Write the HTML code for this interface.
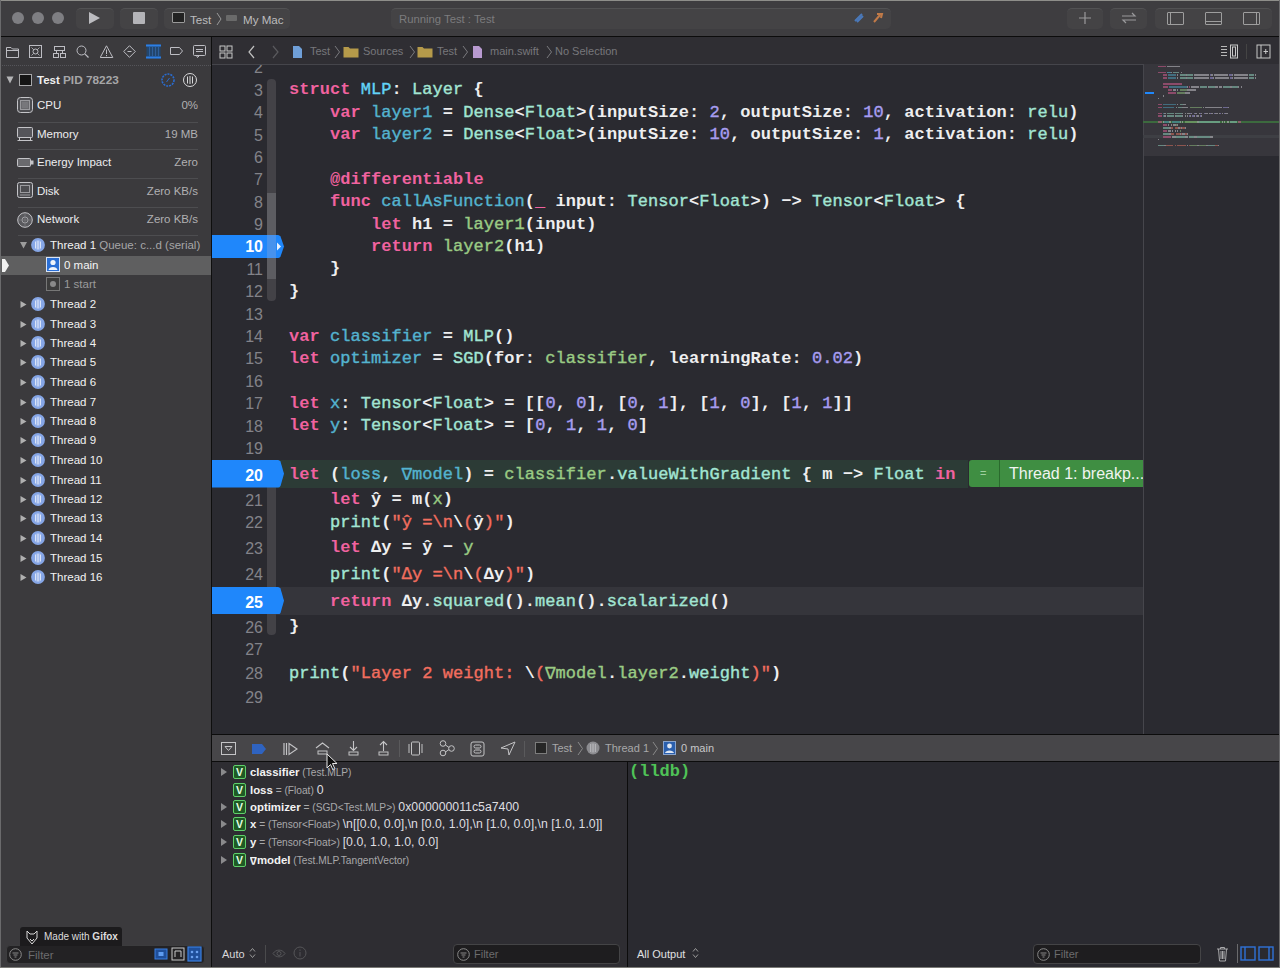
<!DOCTYPE html><html><head><meta charset="utf-8"><style>
*{margin:0;padding:0;box-sizing:border-box}
html,body{width:1280px;height:968px;overflow:hidden;background:#292a30}
body{position:relative;font-family:"Liberation Sans",sans-serif;color:#e0e0e0}
.abs{position:absolute}
.t{position:absolute;white-space:pre;line-height:1}
.code{position:absolute;white-space:pre;font-family:"Liberation Mono",monospace;font-size:17px;line-height:20px;color:#eeeeef;font-weight:bold;letter-spacing:0.05px}
.ln{position:absolute;right:1017px;font-size:16px;line-height:20px;color:#838389;text-align:right;white-space:pre}
.kw{color:#f0629f}.ty,.decl,.tdecl,.num,.fn,.str{font-weight:normal;-webkit-text-stroke:0.4px currentColor}
.ty{color:#a2e5d3}.decl{color:#54b3cf}.tdecl{color:#62d3f7}
.num{color:#a79df0}.fn{color:#9acb84}.str{color:#f26e5f}.mint{color:#a2e5d3}
.nab{display:inline-block;transform:translateY(-2.7px) scaleY(-1)}
.side{position:absolute;font-size:11.5px;line-height:14px;white-space:pre;color:#e6e6e6}
</style></head><body>
<div class="abs" style="left:0px;top:0px;width:1280px;height:36px;background:#3e3d40;"></div>
<div class="abs" style="left:0px;top:0px;width:1280px;height:1px;background:#8e8e8a;"></div>
<div class="abs" style="left:0px;top:36px;width:1280px;height:1px;background:#0c0c0c;"></div>
<div class="abs" style="left:12px;top:12px;width:12px;height:12px;border-radius:50%;background:#7e7e82"></div>
<div class="abs" style="left:32px;top:12px;width:12px;height:12px;border-radius:50%;background:#7e7e82"></div>
<div class="abs" style="left:52px;top:12px;width:12px;height:12px;border-radius:50%;background:#7e7e82"></div>
<div class="abs" style="left:76px;top:8px;width:38px;height:21px;border-radius:5px;background:#444345;border-top:1px solid #525254"></div>
<div class="abs" style="left:120px;top:8px;width:38px;height:21px;border-radius:5px;background:#444345;border-top:1px solid #525254"></div>
<div class="abs" style="left:164px;top:8px;width:126px;height:21px;border-radius:5px;background:#444345;border-top:1px solid #525254"></div>
<div class="abs" style="left:391px;top:8px;width:500px;height:21px;border-radius:5px;background:#444345;border-top:1px solid #525254"></div>
<div class="abs" style="left:1067px;top:8px;width:36px;height:21px;border-radius:5px;background:#444345;border-top:1px solid #525254"></div>
<div class="abs" style="left:1110px;top:8px;width:37px;height:21px;border-radius:5px;background:#444345;border-top:1px solid #525254"></div>
<div class="abs" style="left:1155px;top:8px;width:117px;height:21px;border-radius:5px;background:#444345;border-top:1px solid #525254"></div>
<svg class="abs" style="left:88px;top:11px" width="14" height="14"><polygon points="1,1 12,7 1,13" fill="#bcbcc0"/></svg>
<div class="abs" style="left:133px;top:12px;width:12px;height:12px;background:#b4b4b8;border-radius:1px"></div>
<div class="abs" style="left:172px;top:12px;width:13px;height:11px;border:1px solid #9a9a9a;background:#222;border-radius:1px"></div>
<div class="t" style="left:190px;top:13.5px;font-size:11.6px;color:#bcbcbe">Test</div>
<svg class="abs" style="left:216px;top:12px" width="8" height="15"><polyline points="1,1 5,7 1,13" fill="none" stroke="#9a9a9a" stroke-width="1"/></svg>
<div class="abs" style="left:226px;top:15px;width:11px;height:6px;background:#6a6a6a;border-radius:1px"></div>
<div class="t" style="left:243px;top:13.5px;font-size:11.6px;color:#bcbcbe">My Mac</div>
<div class="t" style="left:399px;top:14px;font-size:11.3px;color:#7c7c7e">Running Test : Test</div>
<svg class="abs" style="left:853px;top:12px" width="12" height="12"><path d="M2,9 L9,2 M4,10 L10,4" stroke="#4a78b8" stroke-width="2"/></svg>
<svg class="abs" style="left:872px;top:11px" width="12" height="13"><path d="M2,11 L8,4 M5,3 L10,3 L9,7" stroke="#c07a48" stroke-width="2" fill="none"/></svg>
<svg class="abs" style="left:1078px;top:11px" width="14" height="14"><path d="M7,1 V13 M1,7 H13" stroke="#9a9a9c" stroke-width="1.2"/></svg>
<svg class="abs" style="left:1120px;top:11px" width="18" height="14"><path d="M2,5 H15 L12,2 M16,9 H3 L6,12" stroke="#9a9a9c" stroke-width="1.2" fill="none"/></svg>
<div class="abs" style="left:1167px;top:12px;width:17px;height:13px;border:1px solid #9e9e9e;border-radius:1px"></div>
<div class="abs" style="left:1170px;top:12px;width:1px;height:13px;background:#9e9e9e;"></div>
<div class="abs" style="left:1205px;top:12px;width:17px;height:13px;border:1px solid #9e9e9e;border-radius:1px"></div>
<div class="abs" style="left:1205px;top:21px;width:17px;height:1px;background:#9e9e9e;"></div>
<div class="abs" style="left:1243px;top:12px;width:17px;height:13px;border:1px solid #9e9e9e;border-radius:1px"></div>
<div class="abs" style="left:1256px;top:12px;width:1px;height:13px;background:#9e9e9e;"></div>
<div class="abs" style="left:0px;top:37px;width:211px;height:931px;background:#3b3a3d;"></div>
<div class="abs" style="left:211px;top:37px;width:1px;height:931px;background:#0e0e0e;"></div>
<svg class="abs" style="left:5px;top:45px" width="15" height="14" viewBox="0 0 15 14"><path d="M1.5,2.5 H6 L7.5,4 H13.5 V12.5 H1.5 Z M1.5,5.5 H13.5" fill="none" stroke="#bdbdc3" stroke-width="1"/></svg>
<svg class="abs" style="left:29px;top:45px" width="14" height="14" viewBox="0 0 14 14"><rect x="0.5" y="0.5" width="12" height="12" fill="none" stroke="#bdbdc3"/><path d="M2.5,2.5 L10.5,10.5 M10.5,2.5 L2.5,10.5" stroke="#bdbdc3" stroke-width="0.8"/><circle cx="6.5" cy="6.5" r="2.5" fill="#3b3a3d" stroke="#bdbdc3"/></svg>
<svg class="abs" style="left:53px;top:45px" width="14" height="14" viewBox="0 0 14 14"><rect x="1.5" y="1.5" width="10" height="4" fill="none" stroke="#bdbdc3"/><rect x="0.5" y="8.5" width="5" height="4" fill="none" stroke="#bdbdc3"/><rect x="7.5" y="8.5" width="5" height="4" fill="none" stroke="#bdbdc3"/><path d="M3.5,5.5 V8.5 M9.5,5.5 V8.5" stroke="#bdbdc3"/></svg>
<svg class="abs" style="left:76px;top:45px" width="14" height="14" viewBox="0 0 14 14"><circle cx="5.5" cy="5.5" r="4.5" fill="none" stroke="#bdbdc3"/><path d="M8.8,8.8 L12.5,12.5" stroke="#bdbdc3" stroke-width="1.2"/></svg>
<svg class="abs" style="left:100px;top:45px" width="14" height="14" viewBox="0 0 14 14"><path d="M6.5,0.8 L12.8,12.5 H0.2 Z" fill="none" stroke="#bdbdc3" stroke-linejoin="round"/><path d="M6.5,4.5 V9 M6.5,10 V11.2" stroke="#bdbdc3"/></svg>
<svg class="abs" style="left:123px;top:45px" width="14" height="14" viewBox="0 0 14 14"><path d="M6.5,0.7 L12.3,6.5 L6.5,12.3 L0.7,6.5 Z" fill="none" stroke="#bdbdc3" stroke-linejoin="round"/><path d="M4.5,6.5 H8.5" stroke="#bdbdc3"/></svg>
<svg class="abs" style="left:146px;top:44px" width="15" height="15" viewBox="0 0 15 15"><rect x="0.5" y="0.5" width="14" height="14" fill="#22466e"/><path d="M0,1.5 H15 M0,13.5 H15" stroke="#2c7fe6" stroke-width="2"/><path d="M3.5,3 V12 M6.5,3 V12 M9.5,3 V12 M12.5,3 V12" stroke="#2f5f9a" stroke-width="1"/></svg>
<svg class="abs" style="left:170px;top:47px" width="14" height="9" viewBox="0 0 14 9"><path d="M0.5,0.5 H9.5 L12.5,4 L9.5,7.5 H0.5 Z" fill="none" stroke="#bdbdc3" stroke-linejoin="round"/></svg>
<svg class="abs" style="left:193px;top:45px" width="14" height="14" viewBox="0 0 14 14"><rect x="0.5" y="0.5" width="12" height="10" rx="1" fill="none" stroke="#bdbdc3"/><path d="M3,4.5 H10 M3,6.5 H10 M3.5,10.5 L4.5,12.5 L6.5,10.5" fill="none" stroke="#bdbdc3"/></svg>
<div class="abs" style="left:0;top:65px;width:211px;height:1px;border-top:1px dotted #55555a"></div>
<svg class="abs" style="left:6px;top:76px" width="9" height="8" viewBox="0 0 9 8"><path d="M0.5,0.5 H7.5 L4,7.5 Z" fill="#b4b4b6"/></svg>
<div class="abs" style="left:19px;top:74px;width:13px;height:12px;border:1px solid #a8a8aa;background:#151515"></div>
<div class="side" style="left:37px;top:73px;font-weight:bold;color:#efefef">Test <span style="color:#a6a6a8;font-size:11.8px">PID 78223</span></div>
<svg class="abs" style="left:160px;top:72px" width="16" height="16" viewBox="0 0 16 16"><circle cx="8" cy="8" r="6" fill="none" stroke="#2a6cd0" stroke-width="1.6" stroke-dasharray="2 1"/><path d="M6.5,10 L9.5,6" stroke="#2a6cd0"/></svg>
<svg class="abs" style="left:182px;top:72px" width="16" height="16" viewBox="0 0 16 16"><circle cx="8" cy="8" r="6.5" fill="none" stroke="#d8d8da" stroke-width="1"/><path d="M5.5,4.5 V11.5 M8,4 V12 M10.5,4.5 V11.5" stroke="#d8d8da" stroke-width="1"/></svg>
<div class="side" style="left:37px;top:98px;color:#ededef">CPU</div>
<div class="side" style="right:1082px;top:98px;color:#b0b0b2">0%</div>
<div class="abs" style="left:18px;top:122px;width:180px;height:1px;background:#4d4d50;"></div>
<div class="side" style="left:37px;top:127px;color:#ededef">Memory</div>
<div class="side" style="right:1082px;top:127px;color:#b0b0b2">19 MB</div>
<div class="abs" style="left:18px;top:149px;width:180px;height:1px;background:#4d4d50;"></div>
<div class="side" style="left:37px;top:155px;color:#ededef">Energy Impact</div>
<div class="side" style="right:1082px;top:155px;color:#b0b0b2">Zero</div>
<div class="abs" style="left:18px;top:178px;width:180px;height:1px;background:#4d4d50;"></div>
<div class="side" style="left:37px;top:184px;color:#ededef">Disk</div>
<div class="side" style="right:1082px;top:184px;color:#b0b0b2">Zero KB/s</div>
<div class="abs" style="left:18px;top:207px;width:180px;height:1px;background:#4d4d50;"></div>
<div class="side" style="left:37px;top:212px;color:#ededef">Network</div>
<div class="side" style="right:1082px;top:212px;color:#b0b0b2">Zero KB/s</div>
<div class="abs" style="left:18px;top:235px;width:180px;height:1px;background:#4d4d50;"></div>
<svg class="abs" style="left:17px;top:97px" width="16" height="16" viewBox="0 0 16 16"><rect x="0.5" y="0.5" width="15" height="15" rx="3" fill="#4c4c50" stroke="#c4c4c8"/><rect x="3.5" y="3.5" width="9" height="9" fill="#6a6a6e" stroke="#9a9a9e"/><path d="M6,5 V11 M8,5 V11 M10,5 V11 M5,6 H11 M5,8 H11 M5,10 H11" stroke="#8a8a8e" stroke-width="0.5"/></svg>
<svg class="abs" style="left:17px;top:127px" width="16" height="14" viewBox="0 0 16 14"><rect x="0.5" y="0.5" width="15" height="10" rx="1" fill="#55555a" stroke="#c4c4c8"/><path d="M2.5,10.5 V13.5 M13.5,10.5 V13.5 M0.5,13.5 H15.5" stroke="#c4c4c8"/></svg>
<svg class="abs" style="left:17px;top:158px" width="17" height="9" viewBox="0 0 17 9"><rect x="0.5" y="0.5" width="13" height="8" rx="1" fill="#6a6a6e" stroke="#c4c4c8"/><rect x="14" y="2.5" width="2.5" height="4" fill="#c4c4c8"/></svg>
<svg class="abs" style="left:17px;top:182px" width="16" height="16" viewBox="0 0 16 16"><rect x="0.5" y="0.5" width="15" height="15" rx="2" fill="#4c4c50" stroke="#c4c4c8"/><rect x="3.5" y="3.5" width="9" height="7" fill="none" stroke="#9a9a9e"/><path d="M3,13 H13" stroke="#9a9a9e"/></svg>
<svg class="abs" style="left:17px;top:212px" width="16" height="16" viewBox="0 0 16 16"><circle cx="8" cy="8" r="7.3" fill="#5a5a5e" stroke="#c4c4c8"/><circle cx="8" cy="8" r="3" fill="none" stroke="#a0a0a4"/><path d="M8,1 V15 M1,8 H15" stroke="#808084" stroke-width="0.6"/></svg>
<svg class="abs" style="left:19px;top:241px" width="9" height="9" viewBox="0 0 9 9"><path d="M1,1 H8 L4.5,7.5 Z" fill="#9c9c9c"/></svg>
<svg class="abs" style="left:31px;top:238px" width="14" height="14"><circle cx="7" cy="7" r="6.9" fill="#86a6e6"/><path d="M4.5,3.5 V10.5 M6.2,2.5 V11.5 M7.8,2.5 V11.5 M9.5,3.5 V10.5" stroke="#f0f4fc" stroke-width="0.8"/></svg>
<div class="side" style="left:50px;top:238px;color:#f2f2f2">Thread 1 <span style="color:#a6a6a8">Queue: c...d (serial)</span></div>
<div class="abs" style="left:0px;top:256px;width:211px;height:19px;background:#5f5f60;"></div>
<svg class="abs" style="left:1px;top:258px" width="9" height="15" viewBox="0 0 9 15"><path d="M1,1 H4 L8,7.5 L4,14 H1 Z" fill="#f2f2f2"/></svg>
<svg class="abs" style="left:46px;top:257px" width="14" height="15" viewBox="0 0 14 15"><rect x="0.5" y="0.5" width="13" height="14" fill="#2a6fd6" stroke="#d8e4f6"/><circle cx="7" cy="5.5" r="2.6" fill="#eef3fb"/><path d="M2.5,13 C3,9 11,9 11.5,13 Z" fill="#eef3fb"/></svg>
<div class="side" style="left:64px;top:258px;color:#f5f5f5;font-size:11.5px">0 main</div>
<svg class="abs" style="left:46px;top:277px" width="14" height="14" viewBox="0 0 14 14"><rect x="0.5" y="0.5" width="13" height="13" fill="#3c3c3c" stroke="#777"/><circle cx="7" cy="7" r="3" fill="#8a8a8a"/></svg>
<div class="side" style="left:64px;top:277px;color:#9a9a9c">1 start</div>
<svg class="abs" style="left:20px;top:300px" width="8" height="9" viewBox="0 0 8 9"><path d="M0.5,1 L6.5,4.5 L0.5,8 Z" fill="#b0b0b0"/></svg>
<svg class="abs" style="left:31px;top:297px" width="14" height="14"><circle cx="7" cy="7" r="6.9" fill="#86a6e6"/><path d="M4.5,3.5 V10.5 M6.2,2.5 V11.5 M7.8,2.5 V11.5 M9.5,3.5 V10.5" stroke="#f0f4fc" stroke-width="0.8"/></svg>
<div class="side" style="left:50px;top:297px;color:#f2f2f2">Thread 2</div>
<svg class="abs" style="left:20px;top:320px" width="8" height="9" viewBox="0 0 8 9"><path d="M0.5,1 L6.5,4.5 L0.5,8 Z" fill="#b0b0b0"/></svg>
<svg class="abs" style="left:31px;top:317px" width="14" height="14"><circle cx="7" cy="7" r="6.9" fill="#86a6e6"/><path d="M4.5,3.5 V10.5 M6.2,2.5 V11.5 M7.8,2.5 V11.5 M9.5,3.5 V10.5" stroke="#f0f4fc" stroke-width="0.8"/></svg>
<div class="side" style="left:50px;top:317px;color:#f2f2f2">Thread 3</div>
<svg class="abs" style="left:20px;top:339px" width="8" height="9" viewBox="0 0 8 9"><path d="M0.5,1 L6.5,4.5 L0.5,8 Z" fill="#b0b0b0"/></svg>
<svg class="abs" style="left:31px;top:336px" width="14" height="14"><circle cx="7" cy="7" r="6.9" fill="#86a6e6"/><path d="M4.5,3.5 V10.5 M6.2,2.5 V11.5 M7.8,2.5 V11.5 M9.5,3.5 V10.5" stroke="#f0f4fc" stroke-width="0.8"/></svg>
<div class="side" style="left:50px;top:336px;color:#f2f2f2">Thread 4</div>
<svg class="abs" style="left:20px;top:358px" width="8" height="9" viewBox="0 0 8 9"><path d="M0.5,1 L6.5,4.5 L0.5,8 Z" fill="#b0b0b0"/></svg>
<svg class="abs" style="left:31px;top:355px" width="14" height="14"><circle cx="7" cy="7" r="6.9" fill="#86a6e6"/><path d="M4.5,3.5 V10.5 M6.2,2.5 V11.5 M7.8,2.5 V11.5 M9.5,3.5 V10.5" stroke="#f0f4fc" stroke-width="0.8"/></svg>
<div class="side" style="left:50px;top:355px;color:#f2f2f2">Thread 5</div>
<svg class="abs" style="left:20px;top:378px" width="8" height="9" viewBox="0 0 8 9"><path d="M0.5,1 L6.5,4.5 L0.5,8 Z" fill="#b0b0b0"/></svg>
<svg class="abs" style="left:31px;top:375px" width="14" height="14"><circle cx="7" cy="7" r="6.9" fill="#86a6e6"/><path d="M4.5,3.5 V10.5 M6.2,2.5 V11.5 M7.8,2.5 V11.5 M9.5,3.5 V10.5" stroke="#f0f4fc" stroke-width="0.8"/></svg>
<div class="side" style="left:50px;top:375px;color:#f2f2f2">Thread 6</div>
<svg class="abs" style="left:20px;top:398px" width="8" height="9" viewBox="0 0 8 9"><path d="M0.5,1 L6.5,4.5 L0.5,8 Z" fill="#b0b0b0"/></svg>
<svg class="abs" style="left:31px;top:395px" width="14" height="14"><circle cx="7" cy="7" r="6.9" fill="#86a6e6"/><path d="M4.5,3.5 V10.5 M6.2,2.5 V11.5 M7.8,2.5 V11.5 M9.5,3.5 V10.5" stroke="#f0f4fc" stroke-width="0.8"/></svg>
<div class="side" style="left:50px;top:395px;color:#f2f2f2">Thread 7</div>
<svg class="abs" style="left:20px;top:417px" width="8" height="9" viewBox="0 0 8 9"><path d="M0.5,1 L6.5,4.5 L0.5,8 Z" fill="#b0b0b0"/></svg>
<svg class="abs" style="left:31px;top:414px" width="14" height="14"><circle cx="7" cy="7" r="6.9" fill="#86a6e6"/><path d="M4.5,3.5 V10.5 M6.2,2.5 V11.5 M7.8,2.5 V11.5 M9.5,3.5 V10.5" stroke="#f0f4fc" stroke-width="0.8"/></svg>
<div class="side" style="left:50px;top:414px;color:#f2f2f2">Thread 8</div>
<svg class="abs" style="left:20px;top:436px" width="8" height="9" viewBox="0 0 8 9"><path d="M0.5,1 L6.5,4.5 L0.5,8 Z" fill="#b0b0b0"/></svg>
<svg class="abs" style="left:31px;top:433px" width="14" height="14"><circle cx="7" cy="7" r="6.9" fill="#86a6e6"/><path d="M4.5,3.5 V10.5 M6.2,2.5 V11.5 M7.8,2.5 V11.5 M9.5,3.5 V10.5" stroke="#f0f4fc" stroke-width="0.8"/></svg>
<div class="side" style="left:50px;top:433px;color:#f2f2f2">Thread 9</div>
<svg class="abs" style="left:20px;top:456px" width="8" height="9" viewBox="0 0 8 9"><path d="M0.5,1 L6.5,4.5 L0.5,8 Z" fill="#b0b0b0"/></svg>
<svg class="abs" style="left:31px;top:453px" width="14" height="14"><circle cx="7" cy="7" r="6.9" fill="#86a6e6"/><path d="M4.5,3.5 V10.5 M6.2,2.5 V11.5 M7.8,2.5 V11.5 M9.5,3.5 V10.5" stroke="#f0f4fc" stroke-width="0.8"/></svg>
<div class="side" style="left:50px;top:453px;color:#f2f2f2">Thread 10</div>
<svg class="abs" style="left:20px;top:476px" width="8" height="9" viewBox="0 0 8 9"><path d="M0.5,1 L6.5,4.5 L0.5,8 Z" fill="#b0b0b0"/></svg>
<svg class="abs" style="left:31px;top:473px" width="14" height="14"><circle cx="7" cy="7" r="6.9" fill="#86a6e6"/><path d="M4.5,3.5 V10.5 M6.2,2.5 V11.5 M7.8,2.5 V11.5 M9.5,3.5 V10.5" stroke="#f0f4fc" stroke-width="0.8"/></svg>
<div class="side" style="left:50px;top:473px;color:#f2f2f2">Thread 11</div>
<svg class="abs" style="left:20px;top:495px" width="8" height="9" viewBox="0 0 8 9"><path d="M0.5,1 L6.5,4.5 L0.5,8 Z" fill="#b0b0b0"/></svg>
<svg class="abs" style="left:31px;top:492px" width="14" height="14"><circle cx="7" cy="7" r="6.9" fill="#86a6e6"/><path d="M4.5,3.5 V10.5 M6.2,2.5 V11.5 M7.8,2.5 V11.5 M9.5,3.5 V10.5" stroke="#f0f4fc" stroke-width="0.8"/></svg>
<div class="side" style="left:50px;top:492px;color:#f2f2f2">Thread 12</div>
<svg class="abs" style="left:20px;top:514px" width="8" height="9" viewBox="0 0 8 9"><path d="M0.5,1 L6.5,4.5 L0.5,8 Z" fill="#b0b0b0"/></svg>
<svg class="abs" style="left:31px;top:511px" width="14" height="14"><circle cx="7" cy="7" r="6.9" fill="#86a6e6"/><path d="M4.5,3.5 V10.5 M6.2,2.5 V11.5 M7.8,2.5 V11.5 M9.5,3.5 V10.5" stroke="#f0f4fc" stroke-width="0.8"/></svg>
<div class="side" style="left:50px;top:511px;color:#f2f2f2">Thread 13</div>
<svg class="abs" style="left:20px;top:534px" width="8" height="9" viewBox="0 0 8 9"><path d="M0.5,1 L6.5,4.5 L0.5,8 Z" fill="#b0b0b0"/></svg>
<svg class="abs" style="left:31px;top:531px" width="14" height="14"><circle cx="7" cy="7" r="6.9" fill="#86a6e6"/><path d="M4.5,3.5 V10.5 M6.2,2.5 V11.5 M7.8,2.5 V11.5 M9.5,3.5 V10.5" stroke="#f0f4fc" stroke-width="0.8"/></svg>
<div class="side" style="left:50px;top:531px;color:#f2f2f2">Thread 14</div>
<svg class="abs" style="left:20px;top:554px" width="8" height="9" viewBox="0 0 8 9"><path d="M0.5,1 L6.5,4.5 L0.5,8 Z" fill="#b0b0b0"/></svg>
<svg class="abs" style="left:31px;top:551px" width="14" height="14"><circle cx="7" cy="7" r="6.9" fill="#86a6e6"/><path d="M4.5,3.5 V10.5 M6.2,2.5 V11.5 M7.8,2.5 V11.5 M9.5,3.5 V10.5" stroke="#f0f4fc" stroke-width="0.8"/></svg>
<div class="side" style="left:50px;top:551px;color:#f2f2f2">Thread 15</div>
<svg class="abs" style="left:20px;top:573px" width="8" height="9" viewBox="0 0 8 9"><path d="M0.5,1 L6.5,4.5 L0.5,8 Z" fill="#b0b0b0"/></svg>
<svg class="abs" style="left:31px;top:570px" width="14" height="14"><circle cx="7" cy="7" r="6.9" fill="#86a6e6"/><path d="M4.5,3.5 V10.5 M6.2,2.5 V11.5 M7.8,2.5 V11.5 M9.5,3.5 V10.5" stroke="#f0f4fc" stroke-width="0.8"/></svg>
<div class="side" style="left:50px;top:570px;color:#f2f2f2">Thread 16</div>
<div class="abs" style="left:6px;top:945px;width:199px;height:19px;background:#232224;border-radius:4px;border:1px solid #3c3c3e"></div>
<svg class="abs" style="left:9px;top:948px" width="13" height="13" viewBox="0 0 13 13"><circle cx="6.5" cy="6.5" r="5.8" fill="none" stroke="#8a8a8a"/><path d="M3.5,5 H9.5 M4.5,7 H8.5 M5.5,9 H7.5" stroke="#8a8a8a"/></svg>
<div class="side" style="left:28px;top:948px;color:#6c6c6e">Filter</div>
<svg class="abs" style="left:154px;top:947px" width="14" height="14" viewBox="0 0 14 14"><rect x="1" y="2" width="12" height="10" fill="#1f4f9a" stroke="#3a7fe0"/><rect x="4.5" y="5" width="5" height="4" fill="#5e9cf0"/></svg>
<svg class="abs" style="left:171px;top:947px" width="14" height="14" viewBox="0 0 14 14"><rect x="1" y="1" width="12" height="12" fill="none" stroke="#c8c8c8"/><path d="M4,4 H10 M4,4 V10 M10,4 V10" stroke="#c8c8c8"/></svg>
<svg class="abs" style="left:187px;top:946px" width="15" height="16" viewBox="0 0 15 16"><rect x="1" y="1" width="13" height="14" fill="#1f4f9a" stroke="#3a7fe0" stroke-width="1.2"/><circle cx="5" cy="6" r="1.3" fill="#6aa0ee"/><circle cx="10" cy="6" r="1.3" fill="#6aa0ee"/><circle cx="5" cy="11" r="1.3" fill="#6aa0ee"/><circle cx="10" cy="11" r="1.3" fill="#6aa0ee"/></svg>
<div class="abs" style="left:20px;top:927px;width:102px;height:19px;background:#1c1b1d;border-radius:3px 3px 0 0"></div>
<svg class="abs" style="left:25px;top:930px" width="14" height="15" viewBox="0 0 14 15"><path d="M2,1 L5,4 H9 L12,1 L12,8 L7,14 L2,8 Z M5,9 L7,11 L9,9" fill="none" stroke="#d8d8d8" stroke-width="1"/></svg>
<div class="t" style="left:44px;top:932px;font-size:10px;color:#dcdcdc">Made with <b>Gifox</b></div>
<div class="abs" style="left:212px;top:37px;width:1068px;height:27px;background:#2f2e33;"></div>
<div class="abs" style="left:212px;top:65px;width:1068px;height:669px;background:#2a2a30;"></div>
<div class="abs" style="left:212px;top:64px;width:1068px;height:1px;background:#45454b;"></div>
<svg class="abs" style="left:219px;top:45px" width="15" height="14" viewBox="0 0 15 14"><rect x="1" y="1" width="5" height="5" fill="none" stroke="#c8c8c8"/><rect x="8" y="1" width="5" height="5" fill="none" stroke="#c8c8c8"/><rect x="1" y="8" width="5" height="5" fill="none" stroke="#c8c8c8"/><rect x="8" y="8" width="5" height="5" fill="none" stroke="#c8c8c8"/></svg>
<svg class="abs" style="left:247px;top:45px" width="9" height="14" viewBox="0 0 9 14"><polyline points="7,1 2,7 7,13" fill="none" stroke="#c0c0c0" stroke-width="1.2"/></svg>
<svg class="abs" style="left:271px;top:45px" width="9" height="14" viewBox="0 0 9 14"><polyline points="2,1 7,7 2,13" fill="none" stroke="#5a5a5e" stroke-width="1.2"/></svg>
<svg class="abs" style="left:292px;top:45px" width="11" height="14" viewBox="0 0 11 14"><path d="M1,1 H7 L10,4 V13 H1 Z" fill="#6f9fd8"/></svg>
<div class="t" style="left:310px;top:46px;font-size:11px;color:#77777b">Test</div>
<svg class="abs" style="left:334px;top:45px" width="7" height="14" viewBox="0 0 7 14"><polyline points="1,1 5.5,7 1,13" fill="none" stroke="#7a7a7e" stroke-width="1"/></svg>
<svg class="abs" style="left:343px;top:46px" width="16" height="12" viewBox="0 0 16 12"><path d="M0.5,1 H5.5 L7,2.5 H15.5 V11.5 H0.5 Z" fill="#b59a4a"/></svg>
<div class="t" style="left:363px;top:46px;font-size:11px;color:#77777b">Sources</div>
<svg class="abs" style="left:409px;top:45px" width="7" height="14" viewBox="0 0 7 14"><polyline points="1,1 5.5,7 1,13" fill="none" stroke="#7a7a7e" stroke-width="1"/></svg>
<svg class="abs" style="left:417px;top:46px" width="16" height="12" viewBox="0 0 16 12"><path d="M0.5,1 H5.5 L7,2.5 H15.5 V11.5 H0.5 Z" fill="#b59a4a"/></svg>
<div class="t" style="left:437px;top:46px;font-size:11px;color:#77777b">Test</div>
<svg class="abs" style="left:462px;top:45px" width="7" height="14" viewBox="0 0 7 14"><polyline points="1,1 5.5,7 1,13" fill="none" stroke="#7a7a7e" stroke-width="1"/></svg>
<svg class="abs" style="left:472px;top:45px" width="11" height="14" viewBox="0 0 11 14"><path d="M1,1 H7 L10,4 V13 H1 Z" fill="#b89ad0"/></svg>
<div class="t" style="left:490px;top:46px;font-size:11px;color:#77777b">main.swift</div>
<svg class="abs" style="left:546px;top:45px" width="7" height="14" viewBox="0 0 7 14"><polyline points="1,1 5.5,7 1,13" fill="none" stroke="#7a7a7e" stroke-width="1"/></svg>
<div class="t" style="left:555px;top:46px;font-size:11px;color:#77777b">No Selection</div>
<svg class="abs" style="left:1220px;top:44px" width="20" height="15" viewBox="0 0 20 15"><path d="M1,2.5 H7 M1,5.5 H7 M1,8.5 H7 M1,11.5 H7" stroke="#b8b8b8"/><rect x="10.5" y="1" width="7" height="13" fill="none" stroke="#c8c8c8"/><rect x="12.5" y="3" width="3" height="9" fill="none" stroke="#c8c8c8"/></svg>
<div class="abs" style="left:1246px;top:44px;width:1px;height:15px;background:#444;"></div>
<svg class="abs" style="left:1256px;top:44px" width="15" height="15" viewBox="0 0 15 15"><rect x="1" y="1" width="13" height="13" fill="none" stroke="#c8c8c8"/><path d="M5,1 V14 M7.5,7.5 H12 M9.75,5 V10" stroke="#c8c8c8"/></svg>
<div class="abs" style="left:276px;top:460px;width:692px;height:28px;background:#2c3b36;"></div>
<div class="abs" style="left:276px;top:587px;width:867px;height:28px;background:#35353b;"></div>
<div class="abs" style="left:267px;top:79px;width:9px;height:114px;background:#434247;border-radius:4px 4px 0 0"></div>
<div class="abs" style="left:267px;top:193px;width:9px;height:86px;background:#5d5d62;"></div>
<div class="abs" style="left:267px;top:279px;width:9px;height:22px;background:#434247;border-radius:0 0 4px 4px"></div>
<div class="abs" style="left:267px;top:487px;width:9px;height:148px;background:#434247;border-radius:0 0 4px 4px"></div>
<svg class="abs" style="left:212px;top:235px" width="73" height="23"><path d="M0,0 H66 Q67.5,0 68.5,1.5 L72,11.5 L68.5,21.5 Q67.5,23 66,23 H0 Z" fill="#1f87fb"/><path d="M65,7.5 L69,11.5 L65,15.5 Z" fill="#eaf2ff"/></svg>
<svg class="abs" style="left:212px;top:460px" width="73" height="27.5"><path d="M0,0 H66 Q67.5,0 68.5,1.5 L72,13.75 L68.5,26.0 Q67.5,27.5 66,27.5 H0 Z" fill="#1f87fb"/></svg>
<svg class="abs" style="left:212px;top:586.5px" width="73" height="27.5"><path d="M0,0 H66 Q67.5,0 68.5,1.5 L72,13.75 L68.5,26.0 Q67.5,27.5 66,27.5 H0 Z" fill="#1f87fb"/></svg>
<div class="abs" style="left:267px;top:235px;width:9px;height:23px;background:rgba(120,160,220,0.45);"></div>
<div class="ln" style="top:58.3px;color:#838389;font-weight:normal;clip-path:inset(6.7px 0 0 0)">2</div>
<div class="ln" style="top:80.7px;color:#838389;font-weight:normal">3</div>
<div class="ln" style="top:103.1px;color:#838389;font-weight:normal">4</div>
<div class="ln" style="top:125.5px;color:#838389;font-weight:normal">5</div>
<div class="ln" style="top:147.9px;color:#838389;font-weight:normal">6</div>
<div class="ln" style="top:170.3px;color:#838389;font-weight:normal">7</div>
<div class="ln" style="top:192.7px;color:#838389;font-weight:normal">8</div>
<div class="ln" style="top:215.0px;color:#838389;font-weight:normal">9</div>
<div class="ln" style="top:237.4px;color:#ffffff;font-weight:bold">10</div>
<div class="ln" style="top:259.8px;color:#838389;font-weight:normal">11</div>
<div class="ln" style="top:282.2px;color:#838389;font-weight:normal">12</div>
<div class="ln" style="top:304.6px;color:#838389;font-weight:normal">13</div>
<div class="ln" style="top:327.0px;color:#838389;font-weight:normal">14</div>
<div class="ln" style="top:349.4px;color:#838389;font-weight:normal">15</div>
<div class="ln" style="top:371.8px;color:#838389;font-weight:normal">16</div>
<div class="ln" style="top:394.2px;color:#838389;font-weight:normal">17</div>
<div class="ln" style="top:416.6px;color:#838389;font-weight:normal">18</div>
<div class="ln" style="top:439.0px;color:#838389;font-weight:normal">19</div>
<div class="ln" style="top:465.5px;color:#ffffff;font-weight:bold">20</div>
<div class="ln" style="top:490.8px;color:#838389;font-weight:normal">21</div>
<div class="ln" style="top:513.4px;color:#838389;font-weight:normal">22</div>
<div class="ln" style="top:538.5px;color:#838389;font-weight:normal">23</div>
<div class="ln" style="top:565.1px;color:#838389;font-weight:normal">24</div>
<div class="ln" style="top:592.5px;color:#ffffff;font-weight:bold">25</div>
<div class="ln" style="top:617.5px;color:#838389;font-weight:normal">26</div>
<div class="ln" style="top:639.8px;color:#838389;font-weight:normal">27</div>
<div class="ln" style="top:664.4px;color:#838389;font-weight:normal">28</div>
<div class="ln" style="top:688.4px;color:#838389;font-weight:normal">29</div>
<div class="code" style="left:289px;top:80.3px"><span class="kw">struct</span> <span class="tdecl">MLP</span>: <span class="ty">Layer</span> {</div>
<div class="code" style="left:289px;top:102.7px">    <span class="kw">var</span> <span class="decl">layer1</span> = <span class="ty">Dense</span>&lt;<span class="ty">Float</span>&gt;(inputSize: <span class="num">2</span>, outputSize: <span class="num">10</span>, activation: <span class="ty">relu</span>)</div>
<div class="code" style="left:289px;top:125.1px">    <span class="kw">var</span> <span class="decl">layer2</span> = <span class="ty">Dense</span>&lt;<span class="ty">Float</span>&gt;(inputSize: <span class="num">10</span>, outputSize: <span class="num">1</span>, activation: <span class="ty">relu</span>)</div>
<div class="code" style="left:289px;top:169.9px">    <span class="kw">@differentiable</span></div>
<div class="code" style="left:289px;top:192.3px">    <span class="kw">func</span> <span class="decl">callAsFunction</span>(<span class="kw">_</span> input: <span class="ty">Tensor</span>&lt;<span class="ty">Float</span>&gt;) −&gt; <span class="ty">Tensor</span>&lt;<span class="ty">Float</span>&gt; {</div>
<div class="code" style="left:289px;top:214.6px">        <span class="kw">let</span> h1 = <span class="fn">layer1</span>(input)</div>
<div class="code" style="left:289px;top:237.0px">        <span class="kw">return</span> <span class="fn">layer2</span>(h1)</div>
<div class="code" style="left:289px;top:259.4px">    }</div>
<div class="code" style="left:289px;top:281.8px">}</div>
<div class="code" style="left:289px;top:326.6px"><span class="kw">var</span> <span class="decl">classifier</span> = <span class="ty">MLP</span>()</div>
<div class="code" style="left:289px;top:349.0px"><span class="kw">let</span> <span class="decl">optimizer</span> = <span class="ty">SGD</span>(for: <span class="fn">classifier</span>, learningRate: <span class="num">0.02</span>)</div>
<div class="code" style="left:289px;top:393.8px"><span class="kw">let</span> <span class="decl">x</span>: <span class="ty">Tensor</span>&lt;<span class="ty">Float</span>&gt; = [[<span class="num">0</span>, <span class="num">0</span>], [<span class="num">0</span>, <span class="num">1</span>], [<span class="num">1</span>, <span class="num">0</span>], [<span class="num">1</span>, <span class="num">1</span>]]</div>
<div class="code" style="left:289px;top:416.2px"><span class="kw">let</span> <span class="decl">y</span>: <span class="ty">Tensor</span>&lt;<span class="ty">Float</span>&gt; = [<span class="num">0</span>, <span class="num">1</span>, <span class="num">1</span>, <span class="num">0</span>]</div>
<div class="code" style="left:289px;top:465.1px"><span class="kw">let</span> (<span class="decl">loss</span>, <span class="decl"><span class="nab">∆</span>model</span>) = <span class="fn">classifier</span>.<span class="ty">valueWithGradient</span> { m −&gt; <span class="ty">Float</span> <span class="kw">in</span></div>
<div class="code" style="left:289px;top:490.4px">    <span class="kw">let</span> ŷ = m(<span class="fn">x</span>)</div>
<div class="code" style="left:289px;top:513.0px">    <span class="ty">print</span>(<span class="str">"ŷ =\n</span>\<span class="str">(</span>ŷ<span class="str">)</span><span class="str">"</span>)</div>
<div class="code" style="left:289px;top:538.1px">    <span class="kw">let</span> ∆y = ŷ − <span class="fn">y</span></div>
<div class="code" style="left:289px;top:564.7px">    <span class="ty">print</span>(<span class="str">"∆y =\n</span>\<span class="str">(</span>∆y<span class="str">)</span><span class="str">"</span>)</div>
<div class="code" style="left:289px;top:592.1px">    <span class="kw">return</span> ∆y.<span class="ty">squared</span>().<span class="ty">mean</span>().<span class="ty">scalarized</span>()</div>
<div class="code" style="left:289px;top:617.1px">}</div>
<div class="code" style="left:289px;top:664.0px"><span class="ty">print</span>(<span class="str">"Layer 2 weight: </span>\<span class="str">(</span><span class="fn"><span class="nab">∆</span>model</span>.<span class="fn">layer2</span>.<span class="ty">weight</span><span class="str">)</span><span class="str">"</span>)</div>
<div class="abs" style="left:969px;top:460px;width:174px;height:27px;background:#3f8e42;border-radius:3px 0 0 3px"></div>
<div class="abs" style="left:999px;top:460px;width:1px;height:27px;background:#2a6a2d;"></div>
<div class="t" style="left:980px;top:468px;font-size:11px;color:#9fd0a0">=</div>
<div class="t" style="left:1009px;top:466px;font-size:16px;color:#f0f4f0">Thread 1: breakp...</div>
<div class="abs" style="left:1143px;top:64px;width:137px;height:670px;background:#2a2a30;"></div>
<div class="abs" style="left:1143px;top:64px;width:1px;height:670px;background:#46464c;"></div>
<div class="abs" style="left:1144px;top:64px;width:136px;height:92px;background:#37363c;"></div>
<div class="abs" style="left:1143px;top:120.57px;width:137px;height:2.8px;background:#3c6a3e;"></div>
<div class="abs" style="left:1143px;top:135.22000000000003px;width:137px;height:2.8px;background:#3e3f44;"></div>
<div class="abs" style="left:1145px;top:91.67px;width:9px;height:2.2px;background:#1f87fb;"></div>
<div class="abs" style="left:1158.0px;top:65.6px;width:7.6px;height:1.7px;opacity:0.6;background:#c45a88"></div>
<div class="abs" style="left:1166.9px;top:65.6px;width:12.7px;height:1.7px;opacity:0.6;background:#b8b8bc"></div>
<div class="abs" style="left:1158.0px;top:71.5px;width:7.6px;height:1.7px;opacity:0.6;background:#c45a88"></div>
<div class="abs" style="left:1166.9px;top:71.5px;width:3.8px;height:1.7px;opacity:0.6;background:#58b8d8"></div>
<div class="abs" style="left:1170.7px;top:71.5px;width:1.3px;height:1.7px;opacity:0.6;background:#b8b8bc"></div>
<div class="abs" style="left:1173.2px;top:71.5px;width:6.3px;height:1.7px;opacity:0.6;background:#86bfae"></div>
<div class="abs" style="left:1180.9px;top:71.5px;width:1.3px;height:1.7px;opacity:0.6;background:#b8b8bc"></div>
<div class="abs" style="left:1163.1px;top:74.4px;width:3.8px;height:1.7px;opacity:0.6;background:#c45a88"></div>
<div class="abs" style="left:1168.2px;top:74.4px;width:7.6px;height:1.7px;opacity:0.6;background:#4a93ab"></div>
<div class="abs" style="left:1177.0px;top:74.4px;width:1.3px;height:1.7px;opacity:0.6;background:#b8b8bc"></div>
<div class="abs" style="left:1179.6px;top:74.4px;width:6.3px;height:1.7px;opacity:0.6;background:#86bfae"></div>
<div class="abs" style="left:1185.9px;top:74.4px;width:1.3px;height:1.7px;opacity:0.6;background:#b8b8bc"></div>
<div class="abs" style="left:1187.2px;top:74.4px;width:6.3px;height:1.7px;opacity:0.6;background:#86bfae"></div>
<div class="abs" style="left:1193.6px;top:74.4px;width:15.2px;height:1.7px;opacity:0.6;background:#b8b8bc"></div>
<div class="abs" style="left:1210.1px;top:74.4px;width:1.3px;height:1.7px;opacity:0.6;background:#8f88c8"></div>
<div class="abs" style="left:1211.3px;top:74.4px;width:1.3px;height:1.7px;opacity:0.6;background:#b8b8bc"></div>
<div class="abs" style="left:1213.9px;top:74.4px;width:14.0px;height:1.7px;opacity:0.6;background:#b8b8bc"></div>
<div class="abs" style="left:1229.1px;top:74.4px;width:2.5px;height:1.7px;opacity:0.6;background:#8f88c8"></div>
<div class="abs" style="left:1231.7px;top:74.4px;width:1.3px;height:1.7px;opacity:0.6;background:#b8b8bc"></div>
<div class="abs" style="left:1234.2px;top:74.4px;width:14.0px;height:1.7px;opacity:0.6;background:#b8b8bc"></div>
<div class="abs" style="left:1249.4px;top:74.4px;width:5.1px;height:1.7px;opacity:0.6;background:#86bfae"></div>
<div class="abs" style="left:1254.5px;top:74.4px;width:1.3px;height:1.7px;opacity:0.6;background:#b8b8bc"></div>
<div class="abs" style="left:1163.1px;top:77.3px;width:3.8px;height:1.7px;opacity:0.6;background:#c45a88"></div>
<div class="abs" style="left:1168.2px;top:77.3px;width:7.6px;height:1.7px;opacity:0.6;background:#4a93ab"></div>
<div class="abs" style="left:1177.0px;top:77.3px;width:1.3px;height:1.7px;opacity:0.6;background:#b8b8bc"></div>
<div class="abs" style="left:1179.6px;top:77.3px;width:6.3px;height:1.7px;opacity:0.6;background:#86bfae"></div>
<div class="abs" style="left:1185.9px;top:77.3px;width:1.3px;height:1.7px;opacity:0.6;background:#b8b8bc"></div>
<div class="abs" style="left:1187.2px;top:77.3px;width:6.3px;height:1.7px;opacity:0.6;background:#86bfae"></div>
<div class="abs" style="left:1193.6px;top:77.3px;width:15.2px;height:1.7px;opacity:0.6;background:#b8b8bc"></div>
<div class="abs" style="left:1210.1px;top:77.3px;width:2.5px;height:1.7px;opacity:0.6;background:#8f88c8"></div>
<div class="abs" style="left:1212.6px;top:77.3px;width:1.3px;height:1.7px;opacity:0.6;background:#b8b8bc"></div>
<div class="abs" style="left:1215.2px;top:77.3px;width:14.0px;height:1.7px;opacity:0.6;background:#b8b8bc"></div>
<div class="abs" style="left:1230.4px;top:77.3px;width:1.3px;height:1.7px;opacity:0.6;background:#8f88c8"></div>
<div class="abs" style="left:1231.7px;top:77.3px;width:1.3px;height:1.7px;opacity:0.6;background:#b8b8bc"></div>
<div class="abs" style="left:1234.2px;top:77.3px;width:14.0px;height:1.7px;opacity:0.6;background:#b8b8bc"></div>
<div class="abs" style="left:1249.4px;top:77.3px;width:5.1px;height:1.7px;opacity:0.6;background:#86bfae"></div>
<div class="abs" style="left:1254.5px;top:77.3px;width:1.3px;height:1.7px;opacity:0.6;background:#b8b8bc"></div>
<div class="abs" style="left:1163.1px;top:83.2px;width:19.1px;height:1.7px;opacity:0.6;background:#c45a88"></div>
<div class="abs" style="left:1163.1px;top:86.1px;width:5.1px;height:1.7px;opacity:0.6;background:#c45a88"></div>
<div class="abs" style="left:1169.4px;top:86.1px;width:17.8px;height:1.7px;opacity:0.6;background:#4a93ab"></div>
<div class="abs" style="left:1187.2px;top:86.1px;width:1.3px;height:1.7px;opacity:0.6;background:#b8b8bc"></div>
<div class="abs" style="left:1188.5px;top:86.1px;width:1.3px;height:1.7px;opacity:0.6;background:#c45a88"></div>
<div class="abs" style="left:1191.0px;top:86.1px;width:7.6px;height:1.7px;opacity:0.6;background:#b8b8bc"></div>
<div class="abs" style="left:1199.9px;top:86.1px;width:7.6px;height:1.7px;opacity:0.6;background:#86bfae"></div>
<div class="abs" style="left:1207.5px;top:86.1px;width:1.3px;height:1.7px;opacity:0.6;background:#b8b8bc"></div>
<div class="abs" style="left:1208.8px;top:86.1px;width:6.3px;height:1.7px;opacity:0.6;background:#86bfae"></div>
<div class="abs" style="left:1215.2px;top:86.1px;width:2.5px;height:1.7px;opacity:0.6;background:#b8b8bc"></div>
<div class="abs" style="left:1219.0px;top:86.1px;width:2.5px;height:1.7px;opacity:0.6;background:#b8b8bc"></div>
<div class="abs" style="left:1222.8px;top:86.1px;width:7.6px;height:1.7px;opacity:0.6;background:#86bfae"></div>
<div class="abs" style="left:1230.4px;top:86.1px;width:1.3px;height:1.7px;opacity:0.6;background:#b8b8bc"></div>
<div class="abs" style="left:1231.7px;top:86.1px;width:6.3px;height:1.7px;opacity:0.6;background:#86bfae"></div>
<div class="abs" style="left:1238.0px;top:86.1px;width:1.3px;height:1.7px;opacity:0.6;background:#b8b8bc"></div>
<div class="abs" style="left:1240.5px;top:86.1px;width:1.3px;height:1.7px;opacity:0.6;background:#b8b8bc"></div>
<div class="abs" style="left:1168.2px;top:89.0px;width:3.8px;height:1.7px;opacity:0.6;background:#c45a88"></div>
<div class="abs" style="left:1173.2px;top:89.0px;width:2.5px;height:1.7px;opacity:0.6;background:#b8b8bc"></div>
<div class="abs" style="left:1177.0px;top:89.0px;width:1.3px;height:1.7px;opacity:0.6;background:#b8b8bc"></div>
<div class="abs" style="left:1179.6px;top:89.0px;width:7.6px;height:1.7px;opacity:0.6;background:#84ad74"></div>
<div class="abs" style="left:1187.2px;top:89.0px;width:8.9px;height:1.7px;opacity:0.6;background:#b8b8bc"></div>
<div class="abs" style="left:1168.2px;top:92.0px;width:7.6px;height:1.7px;opacity:0.6;background:#c45a88"></div>
<div class="abs" style="left:1177.0px;top:92.0px;width:7.6px;height:1.7px;opacity:0.6;background:#84ad74"></div>
<div class="abs" style="left:1184.7px;top:92.0px;width:5.1px;height:1.7px;opacity:0.6;background:#b8b8bc"></div>
<div class="abs" style="left:1163.1px;top:94.9px;width:1.3px;height:1.7px;opacity:0.6;background:#b8b8bc"></div>
<div class="abs" style="left:1158.0px;top:97.8px;width:1.3px;height:1.7px;opacity:0.6;background:#b8b8bc"></div>
<div class="abs" style="left:1158.0px;top:103.7px;width:3.8px;height:1.7px;opacity:0.6;background:#c45a88"></div>
<div class="abs" style="left:1163.1px;top:103.7px;width:12.7px;height:1.7px;opacity:0.6;background:#4a93ab"></div>
<div class="abs" style="left:1177.0px;top:103.7px;width:1.3px;height:1.7px;opacity:0.6;background:#b8b8bc"></div>
<div class="abs" style="left:1179.6px;top:103.7px;width:3.8px;height:1.7px;opacity:0.6;background:#86bfae"></div>
<div class="abs" style="left:1183.4px;top:103.7px;width:2.5px;height:1.7px;opacity:0.6;background:#b8b8bc"></div>
<div class="abs" style="left:1158.0px;top:106.6px;width:3.8px;height:1.7px;opacity:0.6;background:#c45a88"></div>
<div class="abs" style="left:1163.1px;top:106.6px;width:11.4px;height:1.7px;opacity:0.6;background:#4a93ab"></div>
<div class="abs" style="left:1175.8px;top:106.6px;width:1.3px;height:1.7px;opacity:0.6;background:#b8b8bc"></div>
<div class="abs" style="left:1178.3px;top:106.6px;width:3.8px;height:1.7px;opacity:0.6;background:#86bfae"></div>
<div class="abs" style="left:1182.1px;top:106.6px;width:6.3px;height:1.7px;opacity:0.6;background:#b8b8bc"></div>
<div class="abs" style="left:1189.8px;top:106.6px;width:12.7px;height:1.7px;opacity:0.6;background:#84ad74"></div>
<div class="abs" style="left:1202.5px;top:106.6px;width:1.3px;height:1.7px;opacity:0.6;background:#b8b8bc"></div>
<div class="abs" style="left:1205.0px;top:106.6px;width:16.5px;height:1.7px;opacity:0.6;background:#b8b8bc"></div>
<div class="abs" style="left:1222.8px;top:106.6px;width:5.1px;height:1.7px;opacity:0.6;background:#8f88c8"></div>
<div class="abs" style="left:1227.8px;top:106.6px;width:1.3px;height:1.7px;opacity:0.6;background:#b8b8bc"></div>
<div class="abs" style="left:1158.0px;top:112.5px;width:3.8px;height:1.7px;opacity:0.6;background:#c45a88"></div>
<div class="abs" style="left:1163.1px;top:112.5px;width:1.3px;height:1.7px;opacity:0.6;background:#4a93ab"></div>
<div class="abs" style="left:1164.3px;top:112.5px;width:1.3px;height:1.7px;opacity:0.6;background:#b8b8bc"></div>
<div class="abs" style="left:1166.9px;top:112.5px;width:7.6px;height:1.7px;opacity:0.6;background:#86bfae"></div>
<div class="abs" style="left:1174.5px;top:112.5px;width:1.3px;height:1.7px;opacity:0.6;background:#b8b8bc"></div>
<div class="abs" style="left:1175.8px;top:112.5px;width:6.3px;height:1.7px;opacity:0.6;background:#86bfae"></div>
<div class="abs" style="left:1182.1px;top:112.5px;width:1.3px;height:1.7px;opacity:0.6;background:#b8b8bc"></div>
<div class="abs" style="left:1184.7px;top:112.5px;width:1.3px;height:1.7px;opacity:0.6;background:#b8b8bc"></div>
<div class="abs" style="left:1187.2px;top:112.5px;width:2.5px;height:1.7px;opacity:0.6;background:#b8b8bc"></div>
<div class="abs" style="left:1189.8px;top:112.5px;width:1.3px;height:1.7px;opacity:0.6;background:#8f88c8"></div>
<div class="abs" style="left:1191.0px;top:112.5px;width:1.3px;height:1.7px;opacity:0.6;background:#b8b8bc"></div>
<div class="abs" style="left:1193.6px;top:112.5px;width:1.3px;height:1.7px;opacity:0.6;background:#8f88c8"></div>
<div class="abs" style="left:1194.8px;top:112.5px;width:2.5px;height:1.7px;opacity:0.6;background:#b8b8bc"></div>
<div class="abs" style="left:1198.6px;top:112.5px;width:1.3px;height:1.7px;opacity:0.6;background:#b8b8bc"></div>
<div class="abs" style="left:1199.9px;top:112.5px;width:1.3px;height:1.7px;opacity:0.6;background:#8f88c8"></div>
<div class="abs" style="left:1201.2px;top:112.5px;width:1.3px;height:1.7px;opacity:0.6;background:#b8b8bc"></div>
<div class="abs" style="left:1203.7px;top:112.5px;width:1.3px;height:1.7px;opacity:0.6;background:#8f88c8"></div>
<div class="abs" style="left:1205.0px;top:112.5px;width:2.5px;height:1.7px;opacity:0.6;background:#b8b8bc"></div>
<div class="abs" style="left:1208.8px;top:112.5px;width:1.3px;height:1.7px;opacity:0.6;background:#b8b8bc"></div>
<div class="abs" style="left:1210.1px;top:112.5px;width:1.3px;height:1.7px;opacity:0.6;background:#8f88c8"></div>
<div class="abs" style="left:1211.3px;top:112.5px;width:1.3px;height:1.7px;opacity:0.6;background:#b8b8bc"></div>
<div class="abs" style="left:1213.9px;top:112.5px;width:1.3px;height:1.7px;opacity:0.6;background:#8f88c8"></div>
<div class="abs" style="left:1215.2px;top:112.5px;width:2.5px;height:1.7px;opacity:0.6;background:#b8b8bc"></div>
<div class="abs" style="left:1219.0px;top:112.5px;width:1.3px;height:1.7px;opacity:0.6;background:#b8b8bc"></div>
<div class="abs" style="left:1220.2px;top:112.5px;width:1.3px;height:1.7px;opacity:0.6;background:#8f88c8"></div>
<div class="abs" style="left:1221.5px;top:112.5px;width:1.3px;height:1.7px;opacity:0.6;background:#b8b8bc"></div>
<div class="abs" style="left:1224.0px;top:112.5px;width:1.3px;height:1.7px;opacity:0.6;background:#8f88c8"></div>
<div class="abs" style="left:1225.3px;top:112.5px;width:2.5px;height:1.7px;opacity:0.6;background:#b8b8bc"></div>
<div class="abs" style="left:1158.0px;top:115.4px;width:3.8px;height:1.7px;opacity:0.6;background:#c45a88"></div>
<div class="abs" style="left:1163.1px;top:115.4px;width:1.3px;height:1.7px;opacity:0.6;background:#4a93ab"></div>
<div class="abs" style="left:1164.3px;top:115.4px;width:1.3px;height:1.7px;opacity:0.6;background:#b8b8bc"></div>
<div class="abs" style="left:1166.9px;top:115.4px;width:7.6px;height:1.7px;opacity:0.6;background:#86bfae"></div>
<div class="abs" style="left:1174.5px;top:115.4px;width:1.3px;height:1.7px;opacity:0.6;background:#b8b8bc"></div>
<div class="abs" style="left:1175.8px;top:115.4px;width:6.3px;height:1.7px;opacity:0.6;background:#86bfae"></div>
<div class="abs" style="left:1182.1px;top:115.4px;width:1.3px;height:1.7px;opacity:0.6;background:#b8b8bc"></div>
<div class="abs" style="left:1184.7px;top:115.4px;width:1.3px;height:1.7px;opacity:0.6;background:#b8b8bc"></div>
<div class="abs" style="left:1187.2px;top:115.4px;width:1.3px;height:1.7px;opacity:0.6;background:#b8b8bc"></div>
<div class="abs" style="left:1188.5px;top:115.4px;width:1.3px;height:1.7px;opacity:0.6;background:#8f88c8"></div>
<div class="abs" style="left:1189.8px;top:115.4px;width:1.3px;height:1.7px;opacity:0.6;background:#b8b8bc"></div>
<div class="abs" style="left:1192.3px;top:115.4px;width:1.3px;height:1.7px;opacity:0.6;background:#8f88c8"></div>
<div class="abs" style="left:1193.6px;top:115.4px;width:1.3px;height:1.7px;opacity:0.6;background:#b8b8bc"></div>
<div class="abs" style="left:1196.1px;top:115.4px;width:1.3px;height:1.7px;opacity:0.6;background:#8f88c8"></div>
<div class="abs" style="left:1197.4px;top:115.4px;width:1.3px;height:1.7px;opacity:0.6;background:#b8b8bc"></div>
<div class="abs" style="left:1199.9px;top:115.4px;width:1.3px;height:1.7px;opacity:0.6;background:#8f88c8"></div>
<div class="abs" style="left:1201.2px;top:115.4px;width:1.3px;height:1.7px;opacity:0.6;background:#b8b8bc"></div>
<div class="abs" style="left:1158.0px;top:121.3px;width:3.8px;height:1.7px;opacity:0.6;background:#c45a88"></div>
<div class="abs" style="left:1163.1px;top:121.3px;width:1.3px;height:1.7px;opacity:0.6;background:#b8b8bc"></div>
<div class="abs" style="left:1164.3px;top:121.3px;width:5.1px;height:1.7px;opacity:0.6;background:#4a93ab"></div>
<div class="abs" style="left:1169.4px;top:121.3px;width:1.3px;height:1.7px;opacity:0.6;background:#b8b8bc"></div>
<div class="abs" style="left:1172.0px;top:121.3px;width:7.6px;height:1.7px;opacity:0.6;background:#4a93ab"></div>
<div class="abs" style="left:1179.6px;top:121.3px;width:1.3px;height:1.7px;opacity:0.6;background:#b8b8bc"></div>
<div class="abs" style="left:1182.1px;top:121.3px;width:1.3px;height:1.7px;opacity:0.6;background:#b8b8bc"></div>
<div class="abs" style="left:1184.7px;top:121.3px;width:12.7px;height:1.7px;opacity:0.6;background:#84ad74"></div>
<div class="abs" style="left:1197.4px;top:121.3px;width:1.3px;height:1.7px;opacity:0.6;background:#b8b8bc"></div>
<div class="abs" style="left:1198.6px;top:121.3px;width:21.6px;height:1.7px;opacity:0.6;background:#86bfae"></div>
<div class="abs" style="left:1221.5px;top:121.3px;width:1.3px;height:1.7px;opacity:0.6;background:#b8b8bc"></div>
<div class="abs" style="left:1224.0px;top:121.3px;width:1.3px;height:1.7px;opacity:0.6;background:#b8b8bc"></div>
<div class="abs" style="left:1226.6px;top:121.3px;width:2.5px;height:1.7px;opacity:0.6;background:#b8b8bc"></div>
<div class="abs" style="left:1230.4px;top:121.3px;width:6.3px;height:1.7px;opacity:0.6;background:#86bfae"></div>
<div class="abs" style="left:1238.0px;top:121.3px;width:2.5px;height:1.7px;opacity:0.6;background:#c45a88"></div>
<div class="abs" style="left:1163.1px;top:124.2px;width:3.8px;height:1.7px;opacity:0.6;background:#c45a88"></div>
<div class="abs" style="left:1168.2px;top:124.2px;width:1.3px;height:1.7px;opacity:0.6;background:#b8b8bc"></div>
<div class="abs" style="left:1170.7px;top:124.2px;width:1.3px;height:1.7px;opacity:0.6;background:#b8b8bc"></div>
<div class="abs" style="left:1173.2px;top:124.2px;width:2.5px;height:1.7px;opacity:0.6;background:#b8b8bc"></div>
<div class="abs" style="left:1175.8px;top:124.2px;width:1.3px;height:1.7px;opacity:0.6;background:#84ad74"></div>
<div class="abs" style="left:1177.0px;top:124.2px;width:1.3px;height:1.7px;opacity:0.6;background:#b8b8bc"></div>
<div class="abs" style="left:1163.1px;top:127.1px;width:6.3px;height:1.7px;opacity:0.6;background:#86bfae"></div>
<div class="abs" style="left:1169.4px;top:127.1px;width:1.3px;height:1.7px;opacity:0.6;background:#b8b8bc"></div>
<div class="abs" style="left:1170.7px;top:127.1px;width:2.5px;height:1.7px;opacity:0.6;background:#c86a5c"></div>
<div class="abs" style="left:1174.5px;top:127.1px;width:3.8px;height:1.7px;opacity:0.6;background:#c86a5c"></div>
<div class="abs" style="left:1178.3px;top:127.1px;width:1.3px;height:1.7px;opacity:0.6;background:#b8b8bc"></div>
<div class="abs" style="left:1179.6px;top:127.1px;width:1.3px;height:1.7px;opacity:0.6;background:#c86a5c"></div>
<div class="abs" style="left:1180.9px;top:127.1px;width:1.3px;height:1.7px;opacity:0.6;background:#b8b8bc"></div>
<div class="abs" style="left:1182.1px;top:127.1px;width:1.3px;height:1.7px;opacity:0.6;background:#c86a5c"></div>
<div class="abs" style="left:1183.4px;top:127.1px;width:1.3px;height:1.7px;opacity:0.6;background:#c86a5c"></div>
<div class="abs" style="left:1184.7px;top:127.1px;width:1.3px;height:1.7px;opacity:0.6;background:#b8b8bc"></div>
<div class="abs" style="left:1163.1px;top:130.1px;width:3.8px;height:1.7px;opacity:0.6;background:#c45a88"></div>
<div class="abs" style="left:1168.2px;top:130.1px;width:2.5px;height:1.7px;opacity:0.6;background:#b8b8bc"></div>
<div class="abs" style="left:1172.0px;top:130.1px;width:1.3px;height:1.7px;opacity:0.6;background:#b8b8bc"></div>
<div class="abs" style="left:1174.5px;top:130.1px;width:1.3px;height:1.7px;opacity:0.6;background:#b8b8bc"></div>
<div class="abs" style="left:1177.0px;top:130.1px;width:1.3px;height:1.7px;opacity:0.6;background:#b8b8bc"></div>
<div class="abs" style="left:1179.6px;top:130.1px;width:1.3px;height:1.7px;opacity:0.6;background:#84ad74"></div>
<div class="abs" style="left:1163.1px;top:133.0px;width:6.3px;height:1.7px;opacity:0.6;background:#86bfae"></div>
<div class="abs" style="left:1169.4px;top:133.0px;width:1.3px;height:1.7px;opacity:0.6;background:#b8b8bc"></div>
<div class="abs" style="left:1170.7px;top:133.0px;width:3.8px;height:1.7px;opacity:0.6;background:#c86a5c"></div>
<div class="abs" style="left:1175.8px;top:133.0px;width:3.8px;height:1.7px;opacity:0.6;background:#c86a5c"></div>
<div class="abs" style="left:1179.6px;top:133.0px;width:1.3px;height:1.7px;opacity:0.6;background:#b8b8bc"></div>
<div class="abs" style="left:1180.9px;top:133.0px;width:1.3px;height:1.7px;opacity:0.6;background:#c86a5c"></div>
<div class="abs" style="left:1182.1px;top:133.0px;width:2.5px;height:1.7px;opacity:0.6;background:#b8b8bc"></div>
<div class="abs" style="left:1184.7px;top:133.0px;width:1.3px;height:1.7px;opacity:0.6;background:#c86a5c"></div>
<div class="abs" style="left:1185.9px;top:133.0px;width:1.3px;height:1.7px;opacity:0.6;background:#c86a5c"></div>
<div class="abs" style="left:1187.2px;top:133.0px;width:1.3px;height:1.7px;opacity:0.6;background:#b8b8bc"></div>
<div class="abs" style="left:1163.1px;top:135.9px;width:7.6px;height:1.7px;opacity:0.6;background:#c45a88"></div>
<div class="abs" style="left:1172.0px;top:135.9px;width:3.8px;height:1.7px;opacity:0.6;background:#b8b8bc"></div>
<div class="abs" style="left:1175.8px;top:135.9px;width:8.9px;height:1.7px;opacity:0.6;background:#86bfae"></div>
<div class="abs" style="left:1184.7px;top:135.9px;width:3.8px;height:1.7px;opacity:0.6;background:#b8b8bc"></div>
<div class="abs" style="left:1188.5px;top:135.9px;width:5.1px;height:1.7px;opacity:0.6;background:#86bfae"></div>
<div class="abs" style="left:1193.6px;top:135.9px;width:3.8px;height:1.7px;opacity:0.6;background:#b8b8bc"></div>
<div class="abs" style="left:1197.4px;top:135.9px;width:12.7px;height:1.7px;opacity:0.6;background:#86bfae"></div>
<div class="abs" style="left:1210.1px;top:135.9px;width:2.5px;height:1.7px;opacity:0.6;background:#b8b8bc"></div>
<div class="abs" style="left:1158.0px;top:138.8px;width:1.3px;height:1.7px;opacity:0.6;background:#b8b8bc"></div>
<div class="abs" style="left:1158.0px;top:144.7px;width:6.3px;height:1.7px;opacity:0.6;background:#86bfae"></div>
<div class="abs" style="left:1164.3px;top:144.7px;width:1.3px;height:1.7px;opacity:0.6;background:#b8b8bc"></div>
<div class="abs" style="left:1165.6px;top:144.7px;width:7.6px;height:1.7px;opacity:0.6;background:#c86a5c"></div>
<div class="abs" style="left:1174.5px;top:144.7px;width:1.3px;height:1.7px;opacity:0.6;background:#c86a5c"></div>
<div class="abs" style="left:1177.0px;top:144.7px;width:8.9px;height:1.7px;opacity:0.6;background:#c86a5c"></div>
<div class="abs" style="left:1187.2px;top:144.7px;width:1.3px;height:1.7px;opacity:0.6;background:#b8b8bc"></div>
<div class="abs" style="left:1188.5px;top:144.7px;width:1.3px;height:1.7px;opacity:0.6;background:#c86a5c"></div>
<div class="abs" style="left:1189.8px;top:144.7px;width:7.6px;height:1.7px;opacity:0.6;background:#84ad74"></div>
<div class="abs" style="left:1197.4px;top:144.7px;width:1.3px;height:1.7px;opacity:0.6;background:#b8b8bc"></div>
<div class="abs" style="left:1198.6px;top:144.7px;width:7.6px;height:1.7px;opacity:0.6;background:#84ad74"></div>
<div class="abs" style="left:1206.3px;top:144.7px;width:1.3px;height:1.7px;opacity:0.6;background:#b8b8bc"></div>
<div class="abs" style="left:1207.5px;top:144.7px;width:7.6px;height:1.7px;opacity:0.6;background:#86bfae"></div>
<div class="abs" style="left:1215.2px;top:144.7px;width:1.3px;height:1.7px;opacity:0.6;background:#c86a5c"></div>
<div class="abs" style="left:1216.4px;top:144.7px;width:1.3px;height:1.7px;opacity:0.6;background:#c86a5c"></div>
<div class="abs" style="left:1217.7px;top:144.7px;width:1.3px;height:1.7px;opacity:0.6;background:#b8b8bc"></div>
<div class="abs" style="left:212px;top:734px;width:1068px;height:1px;background:#0c0c0c;"></div>
<div class="abs" style="left:212px;top:735px;width:1068px;height:26px;background:#474649;"></div>
<div class="abs" style="left:212px;top:761px;width:1068px;height:1px;background:#0c0c0c;"></div>
<div class="abs" style="left:212px;top:762px;width:415px;height:206px;background:#2e2d32;"></div>
<div class="abs" style="left:627px;top:762px;width:1px;height:206px;background:#0c0c0c;"></div>
<div class="abs" style="left:628px;top:762px;width:652px;height:206px;background:#2a2a30;"></div>
<svg class="abs" style="left:221px;top:742px" width="15" height="13" viewBox="0 0 15 13"><rect x="0.5" y="0.5" width="14" height="12" fill="none" stroke="#c4c4c6"/><path d="M4,4.5 H11 L7.5,8.5 Z" fill="none" stroke="#c4c4c6"/></svg>
<svg class="abs" style="left:252px;top:744px" width="15" height="10" viewBox="0 0 15 10"><path d="M0,0 H10 L14,5 L10,10 H0 Z" fill="#2f63c0"/></svg>
<svg class="abs" style="left:283px;top:742px" width="15" height="14" viewBox="0 0 15 14"><path d="M1,1 V13 M3.5,1 V13" stroke="#c4c4c6" stroke-width="1.2"/><path d="M6,1.5 L14,7 L6,12.5 Z" fill="none" stroke="#c4c4c6" stroke-width="1.1"/></svg>
<svg class="abs" style="left:315px;top:741px" width="15" height="16" viewBox="0 0 15 16"><path d="M1,7 L7.5,2 L14,7" fill="none" stroke="#c4c4c6" stroke-width="1.1"/><rect x="3" y="10" width="9" height="3" fill="none" stroke="#c4c4c6"/></svg>
<svg class="abs" style="left:346px;top:740px" width="15" height="17" viewBox="0 0 15 17"><path d="M7.5,1 V10 M4,7 L7.5,10.5 L11,7" fill="none" stroke="#c4c4c6" stroke-width="1.1"/><rect x="3" y="12" width="9" height="3" fill="none" stroke="#c4c4c6"/></svg>
<svg class="abs" style="left:376px;top:740px" width="15" height="17" viewBox="0 0 15 17"><path d="M7.5,11 V2 M4,5 L7.5,1.5 L11,5" fill="none" stroke="#c4c4c6" stroke-width="1.1"/><rect x="3" y="12" width="9" height="3" fill="none" stroke="#c4c4c6"/></svg>
<div class="abs" style="left:399px;top:740px;width:1px;height:17px;background:#5a5a5c;"></div>
<svg class="abs" style="left:408px;top:741px" width="15" height="15" viewBox="0 0 15 15"><rect x="3.5" y="1" width="8" height="13" rx="1" fill="none" stroke="#c4c4c6"/><path d="M1,3 V12 M14,3 V12" stroke="#c4c4c6"/></svg>
<svg class="abs" style="left:439px;top:740px" width="16" height="17" viewBox="0 0 16 17"><circle cx="4" cy="3.5" r="2.8" fill="none" stroke="#c4c4c6"/><circle cx="4" cy="13" r="2.8" fill="none" stroke="#c4c4c6"/><circle cx="12.5" cy="8.5" r="2.8" fill="none" stroke="#c4c4c6"/><path d="M6.5,5 L10,7.5 M6.5,12 L10,9.5" stroke="#c4c4c6"/></svg>
<svg class="abs" style="left:470px;top:741px" width="15" height="16" viewBox="0 0 15 16"><rect x="1" y="1" width="13" height="14" rx="2" fill="none" stroke="#c4c4c6"/><rect x="4" y="4" width="7" height="3" rx="1.5" fill="none" stroke="#c4c4c6"/><rect x="4" y="9" width="7" height="3" rx="1.5" fill="none" stroke="#c4c4c6"/></svg>
<svg class="abs" style="left:500px;top:741px" width="16" height="15" viewBox="0 0 16 15"><path d="M15,1 L1,7 L8,8 L9,14 Z" fill="none" stroke="#c4c4c6" stroke-linejoin="round"/></svg>
<div class="abs" style="left:524px;top:741px;width:1px;height:16px;background:#5a5a5c;"></div>
<div class="abs" style="left:535px;top:742px;width:12px;height:12px;border:1px solid #7c7c7c;background:#262626"></div>
<div class="t" style="left:552px;top:743px;font-size:11px;color:#a8a8aa">Test</div>
<svg class="abs" style="left:577px;top:741px" width="7" height="15" viewBox="0 0 7 15"><polyline points="1,1 5.5,7.5 1,14" fill="none" stroke="#8a8a8a"/></svg>
<svg class="abs" style="left:586px;top:741px" width="14" height="14" viewBox="0 0 14 14"><circle cx="7" cy="7" r="6.5" fill="#8c8c90"/><path d="M4.5,3 V11 M6.2,2.5 V11.5 M7.8,2.5 V11.5 M9.5,3 V11" stroke="#bdbdc0" stroke-width="0.8"/></svg>
<div class="t" style="left:605px;top:743px;font-size:11px;color:#a8a8aa">Thread 1</div>
<svg class="abs" style="left:652px;top:741px" width="7" height="15" viewBox="0 0 7 15"><polyline points="1,1 5.5,7.5 1,14" fill="none" stroke="#8a8a8a"/></svg>
<svg class="abs" style="left:663px;top:741px" width="13" height="14" viewBox="0 0 13 14"><rect x="0.5" y="0.5" width="12" height="13" fill="#2a5fae" stroke="#8aa4cc"/><circle cx="6.5" cy="5" r="2.4" fill="#dde6f3"/><path d="M2,12 C2.5,8.5 10.5,8.5 11,12 Z" fill="#dde6f3"/></svg>
<div class="t" style="left:681px;top:743px;font-size:11px;color:#c8c8ca">0 main</div>
<svg class="abs" style="left:326px;top:753px" width="13" height="19" viewBox="0 0 13 19"><path d="M1,1 L1,15 L4.5,11.5 L7,17 L9,16 L6.5,10.5 L11,10.5 Z" fill="#101010" stroke="#e8e8e8" stroke-width="1"/></svg>
<svg class="abs" style="left:220px;top:767px" width="8" height="10" viewBox="0 0 8 10"><path d="M1,1 L7,5 L1,9 Z" fill="#8a8a8c"/></svg>
<div class="abs" style="left:233px;top:765px;width:13px;height:14px;border:1px solid #5fd06a;background:#1f5a25;border-radius:2px"></div>
<div class="t" style="left:236px;top:767px;font-size:10.5px;font-weight:bold;color:#e6ffe6">V</div>
<div class="t" style="left:250px;top:766px;font-size:11.4px;color:#f2f2f2"><b>classifier</b><span style="color:#a8a8aa;font-size:10.2px"> (Test.MLP)</span><span style="color:#dedee0;font-size:12.3px"></span></div>
<div class="abs" style="left:233px;top:783px;width:13px;height:14px;border:1px solid #5fd06a;background:#1f5a25;border-radius:2px"></div>
<div class="t" style="left:236px;top:785px;font-size:10.5px;font-weight:bold;color:#e6ffe6">V</div>
<div class="t" style="left:250px;top:784px;font-size:11.4px;color:#f2f2f2"><b>loss</b><span style="color:#a8a8aa;font-size:10.2px"> = (Float) </span><span style="color:#dedee0;font-size:12.3px">0</span></div>
<svg class="abs" style="left:220px;top:802px" width="8" height="10" viewBox="0 0 8 10"><path d="M1,1 L7,5 L1,9 Z" fill="#8a8a8c"/></svg>
<div class="abs" style="left:233px;top:800px;width:13px;height:14px;border:1px solid #5fd06a;background:#1f5a25;border-radius:2px"></div>
<div class="t" style="left:236px;top:802px;font-size:10.5px;font-weight:bold;color:#e6ffe6">V</div>
<div class="t" style="left:250px;top:801px;font-size:11.4px;color:#f2f2f2"><b>optimizer</b><span style="color:#a8a8aa;font-size:10.2px"> = (SGD&lt;Test.MLP&gt;) </span><span style="color:#dedee0;font-size:12.3px">0x000000011c5a7400</span></div>
<svg class="abs" style="left:220px;top:819px" width="8" height="10" viewBox="0 0 8 10"><path d="M1,1 L7,5 L1,9 Z" fill="#8a8a8c"/></svg>
<div class="abs" style="left:233px;top:817px;width:13px;height:14px;border:1px solid #5fd06a;background:#1f5a25;border-radius:2px"></div>
<div class="t" style="left:236px;top:819px;font-size:10.5px;font-weight:bold;color:#e6ffe6">V</div>
<div class="t" style="left:250px;top:818px;font-size:11.4px;color:#f2f2f2"><b>x</b><span style="color:#a8a8aa;font-size:10.2px"> = (Tensor&lt;Float&gt;) </span><span style="color:#dedee0;font-size:12.3px">\n[[0.0, 0.0],\n [0.0, 1.0],\n [1.0, 0.0],\n [1.0, 1.0]]</span></div>
<svg class="abs" style="left:220px;top:837px" width="8" height="10" viewBox="0 0 8 10"><path d="M1,1 L7,5 L1,9 Z" fill="#8a8a8c"/></svg>
<div class="abs" style="left:233px;top:835px;width:13px;height:14px;border:1px solid #5fd06a;background:#1f5a25;border-radius:2px"></div>
<div class="t" style="left:236px;top:837px;font-size:10.5px;font-weight:bold;color:#e6ffe6">V</div>
<div class="t" style="left:250px;top:836px;font-size:11.4px;color:#f2f2f2"><b>y</b><span style="color:#a8a8aa;font-size:10.2px"> = (Tensor&lt;Float&gt;) </span><span style="color:#dedee0;font-size:12.3px">[0.0, 1.0, 1.0, 0.0]</span></div>
<svg class="abs" style="left:220px;top:855px" width="8" height="10" viewBox="0 0 8 10"><path d="M1,1 L7,5 L1,9 Z" fill="#8a8a8c"/></svg>
<div class="abs" style="left:233px;top:853px;width:13px;height:14px;border:1px solid #5fd06a;background:#1f5a25;border-radius:2px"></div>
<div class="t" style="left:236px;top:855px;font-size:10.5px;font-weight:bold;color:#e6ffe6">V</div>
<div class="t" style="left:250px;top:854px;font-size:11.4px;color:#f2f2f2"><b><span style="display:inline-block;transform:scaleY(-1)">∆</span>model</b><span style="color:#a8a8aa;font-size:10.2px"> (Test.MLP.TangentVector)</span><span style="color:#dedee0;font-size:12.3px"></span></div>
<div class="t" style="left:629px;top:763px;font-family:'Liberation Mono',monospace;font-size:17px;font-weight:bold;color:#4fc257">(lldb)</div>
<div class="t" style="left:222px;top:949px;font-size:11px;color:#d8d8da">Auto</div>
<svg class="abs" style="left:249px;top:947px" width="7" height="12" viewBox="0 0 7 12"><path d="M1,4.5 L3.5,1.5 L6,4.5 M1,7.5 L3.5,10.5 L6,7.5" fill="none" stroke="#9a9a9a"/></svg>
<div class="abs" style="left:265px;top:945px;width:1px;height:18px;background:#4a4a4c;"></div>
<svg class="abs" style="left:272px;top:948px" width="14" height="11" viewBox="0 0 14 11"><path d="M1,5.5 C4,1 10,1 13,5.5 C10,10 4,10 1,5.5 Z" fill="none" stroke="#555558"/><circle cx="7" cy="5.5" r="2" fill="none" stroke="#555558"/></svg>
<svg class="abs" style="left:293px;top:946px" width="14" height="14" viewBox="0 0 14 14"><circle cx="7" cy="7" r="6" fill="none" stroke="#555558"/><path d="M7,6 V10.5 M7,3.5 V4.8" stroke="#555558"/></svg>
<div class="abs" style="left:453px;top:944px;width:167px;height:20px;background:#1e1d1f;border:1px solid #444446;border-radius:4px"></div>
<svg class="abs" style="left:457px;top:948px" width="13" height="13" viewBox="0 0 13 13"><circle cx="6.5" cy="6.5" r="5.8" fill="none" stroke="#8a8a8a"/><path d="M3.5,5 H9.5 M4.5,7 H8.5 M5.5,9 H7.5" stroke="#8a8a8a"/></svg>
<div class="t" style="left:474px;top:949px;font-size:11px;color:#6c6c6e">Filter</div>
<div class="t" style="left:637px;top:949px;font-size:11px;color:#e0e0e2">All Output</div>
<svg class="abs" style="left:692px;top:947px" width="7" height="12" viewBox="0 0 7 12"><path d="M1,4.5 L3.5,1.5 L6,4.5 M1,7.5 L3.5,10.5 L6,7.5" fill="none" stroke="#9a9a9a"/></svg>
<div class="abs" style="left:1033px;top:944px;width:168px;height:20px;background:#1e1d1f;border:1px solid #444446;border-radius:4px"></div>
<svg class="abs" style="left:1037px;top:948px" width="13" height="13" viewBox="0 0 13 13"><circle cx="6.5" cy="6.5" r="5.8" fill="none" stroke="#8a8a8a"/><path d="M3.5,5 H9.5 M4.5,7 H8.5 M5.5,9 H7.5" stroke="#8a8a8a"/></svg>
<div class="t" style="left:1054px;top:949px;font-size:11px;color:#6c6c6e">Filter</div>
<svg class="abs" style="left:1216px;top:946px" width="13" height="16" viewBox="0 0 13 16"><path d="M1,3 H12 M4.5,3 V1.5 H8.5 V3 M2.5,3 L3.5,15 H9.5 L10.5,3 M5,5 V13 M6.5,5 V13 M8,5 V13" fill="none" stroke="#a8a8aa"/></svg>
<div class="abs" style="left:1237px;top:944px;width:1px;height:19px;background:#6a6a6c;"></div>
<svg class="abs" style="left:1240px;top:946px" width="16" height="15" viewBox="0 0 16 15"><rect x="1" y="1" width="14" height="13" fill="none" stroke="#2f72d8" stroke-width="1.4"/><path d="M5,1 V14" stroke="#2f72d8" stroke-width="1.4"/></svg>
<svg class="abs" style="left:1258px;top:946px" width="16" height="15" viewBox="0 0 16 15"><rect x="1" y="1" width="14" height="13" fill="none" stroke="#2f72d8" stroke-width="1.4"/><path d="M11,1 V14" stroke="#2f72d8" stroke-width="1.4"/></svg>
<div class="abs" style="left:0px;top:0px;width:1px;height:968px;background:#6a6a6c;"></div>
<div class="abs" style="left:1279px;top:0px;width:1px;height:968px;background:#6a6a6c;"></div>
<div class="abs" style="left:0px;top:967px;width:1280px;height:1px;background:#7a7a76;"></div>
</body></html>
